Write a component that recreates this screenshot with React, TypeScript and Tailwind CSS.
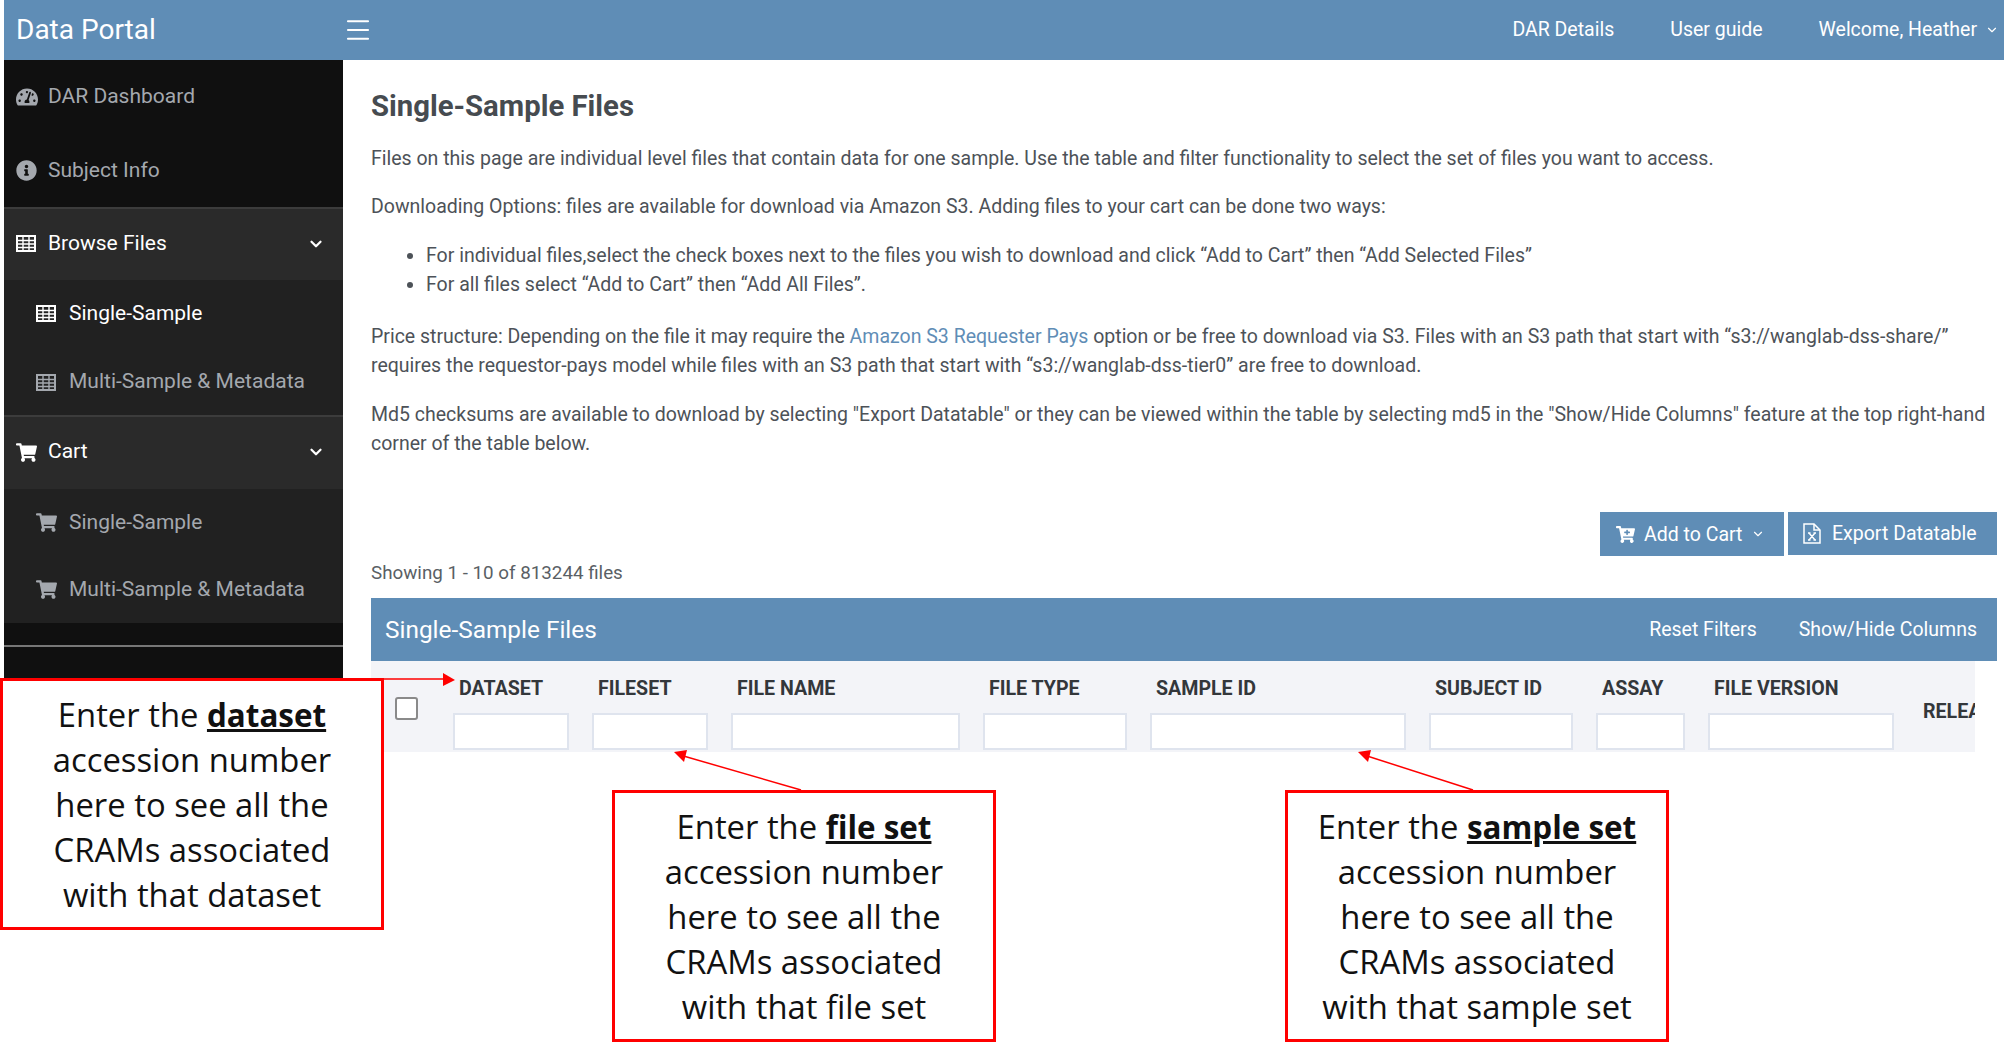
import { ChevronDown, Menu } from "lucide-react";
import { FaCartPlus, FaInfoCircle, FaShoppingCart, FaTachometerAlt } from "react-icons/fa";

const filterColumns = [
  { label: "DATASET", width: "w-[116px]" },
  { label: "FILESET", width: "w-[116px]" },
  { label: "FILE NAME", width: "w-[229px]" },
  { label: "FILE TYPE", width: "w-[144px]" },
  { label: "SAMPLE ID", width: "w-[256px]" },
  { label: "SUBJECT ID", width: "w-[144px]" },
  { label: "ASSAY", width: "w-[89px]" },
  { label: "FILE VERSION", width: "w-[186px]" },
];

// thin outlined grid, the react-icons table glyph has a filled head
function TableIcon() {
  return (
    <svg width="20" height="17" viewBox="0 0 20 17" fill="none" stroke="currentColor">
      <rect x="1" y="1" width="18" height="15" strokeWidth="2" />
      <path d="M1 5.5H19M1 9H19M1 12.5H19M7 1V16M13 1V16" strokeWidth="1.4" />
    </svg>
  );
}

function ExcelFileIcon() {
  return (
    <svg width="18" height="21" viewBox="0 0 18 21" fill="none" stroke="currentColor" strokeWidth="1.5">
      <path d="M1 1H11L17 7V20H1Z" />
      <path d="M11 1V7H17" />
      <path d="M5 10H7.5M10.5 10H13M5 17H7.5M10.5 17H13M6 10L12 17M12 10L6 17" strokeWidth="1.4" />
    </svg>
  );
}

function SideItem({ icon, label, active, sub, caret }: { icon: React.ReactNode; label: string; active?: boolean; sub?: boolean; caret?: boolean }) {
  return (
    <div className={`flex h-full items-center ${sub ? "pl-[32px]" : "pl-[12px]"} pr-[18px] text-[21px] ${active ? "text-white" : "text-[#a4a8ae]"}`}>
      <span className={`flex ${sub ? "w-[33px]" : "w-[32px]"} shrink-0 items-center text-[21px]`}>{icon}</span>
      <span className="flex-1 whitespace-nowrap">{label}</span>
      {caret && <ChevronDown className="h-[18px] w-[18px] text-white" strokeWidth={3} />}
    </div>
  );
}

function Sidebar() {
  return (
    <aside className="w-[339px] shrink-0 bg-[#101010]">
      <div className="h-[74px]"><SideItem icon={<FaTachometerAlt className="text-[22px]" />} label="DAR Dashboard" /></div>
      <div className="h-[73px]"><SideItem icon={<FaInfoCircle />} label="Subject Info" /></div>
      <div className="h-[73px] border-t-2 border-[#3c3c3c] bg-[#2a2a2a] pb-[2px]"><SideItem icon={<TableIcon />} label="Browse Files" active caret /></div>
      <div className="bg-[#212121]">
        <div className="h-[67px]"><SideItem icon={<TableIcon />} label="Single-Sample" active sub /></div>
        <div className="h-[68px] pt-[2px]"><SideItem icon={<TableIcon />} label="Multi-Sample &amp; Metadata" sub /></div>
      </div>
      <div className="h-[74px] border-t-2 border-[#3c3c3c] bg-[#2a2a2a] pb-[2px]"><SideItem icon={<FaShoppingCart />} label="Cart" active caret /></div>
      <div className="bg-[#212121]">
        <div className="h-[67px]"><SideItem icon={<FaShoppingCart />} label="Single-Sample" sub /></div>
        <div className="h-[67px]"><SideItem icon={<FaShoppingCart />} label="Multi-Sample &amp; Metadata" sub /></div>
      </div>
      <div className="mt-[22px] h-[150px] border-t-2 border-[#777777]" />
    </aside>
  );
}

function Callout({ className, bold, last }: { className: string; bold: string; last: string }) {
  return (
    <div className={`absolute flex h-[252px] w-[384px] flex-col items-center justify-center border-[3px] border-[#ff0000] bg-white text-center font-['Open_Sans',sans-serif] text-[32.8px] leading-[45px] text-[#111] ${className}`}>
      <div>Enter the <b className="text-[31.4px] underline">{bold}</b></div>
      <div>accession number</div>
      <div>here to see all the</div>
      <div>CRAMs associated</div>
      <div>with that {last}</div>
    </div>
  );
}

function Arrows() {
  return (
    <svg className="pointer-events-none absolute top-0 left-0" width="2004" height="1053">
      <g stroke="#ff0000" strokeWidth="1.5" fill="#ff0000">
        <line x1="384" y1="679" x2="445" y2="679" />
        <polygon points="443,673 455,680 443,686" stroke="none" />
        <line x1="801" y1="790" x2="680" y2="755" />
        <polygon points="674,752 687,750 684,762" stroke="none" />
        <line x1="1473" y1="790" x2="1364" y2="755" />
        <polygon points="1358,752 1371,750 1368,762" stroke="none" />
      </g>
    </svg>
  );
}

export default function App() {
  return (
    <div className="relative h-[1053px] w-[2004px] overflow-hidden bg-white pl-[4px] font-['Roboto',sans-serif] text-[19.5px] text-[#4d5258]">
      <header className="flex h-[60px] items-center bg-[#5f8db6] text-white">
        <div className="w-[339px] pl-[12px] text-[28px]">Data Portal</div>
        <Menu className="h-[30px] w-[30px]" strokeWidth={1.7} />
        <nav className="ml-auto flex items-center gap-[56px] pr-[5px] text-[19.5px]">
          <span>DAR Details</span>
          <span>User guide</span>
          <span className="flex items-center gap-[8px]">Welcome, Heather <ChevronDown className="h-[14px] w-[14px]" /></span>
        </nav>
      </header>
      <div className="flex h-[900px] items-start">
        <Sidebar />
        <main className="min-w-0 flex-1 pt-[27px] pl-[28px] pr-[7px] leading-[29px]">
          <h1 className="text-[29.3px] leading-[38px] font-bold text-[#464b50]">Single-Sample Files</h1>
          <p className="mt-[19px]">Files on this page are individual level files that contain data for one sample. Use the table and filter functionality to select the set of files you want to access.</p>
          <p className="mt-[19px]">Downloading Options: files are available for download via Amazon S3. Adding files to your cart can be done two ways:</p>
          <ul className="mt-[20px] list-disc pl-[55px]">
            <li>For individual files,select the check boxes next to the files you wish to download and click “Add to Cart” then “Add Selected Files”</li>
            <li>For all files select “Add to Cart” then “Add All Files”.</li>
          </ul>
          <p className="mt-[23px]">
            Price structure: Depending on the file it may require the <span className="text-[#5f8db6]">Amazon S3 Requester Pays</span> option or be free to download via S3. Files with an S3 path that start with “s3://wanglab-dss-share/” requires the requestor-pays model while files with an S3 path that start with “s3://wanglab-dss-tier0” are free to download.
          </p>
          <p className="mt-[20px]">Md5 checksums are available to download by selecting "Export Datatable" or they can be viewed within the table by selecting md5 in the "Show/Hide Columns" feature at the top right-hand corner of the table below.</p>
          <div className="mt-[54px] flex justify-end gap-[4px] text-white">
            <button className="flex h-[44px] w-[184px] items-center gap-[9px] bg-[#5f8db6] pl-[16px]"><FaCartPlus className="text-[19px]" />Add to Cart<ChevronDown className="h-[14px] w-[14px]" /></button>
            <button className="flex h-[43px] w-[209px] items-center gap-[11px] bg-[#5f8db6] pl-[15px]"><ExcelFileIcon />Export Datatable</button>
          </div>
          <div className="mt-[2px] text-[18.8px] leading-[30px] text-[#5a5f65]">Showing 1 - 10 of 813244 files</div>
          <div className="mt-[10px] flex h-[63px] items-center justify-between bg-[#5f8db6] pr-[20px] pl-[14px] text-white">
            <span className="text-[24.4px]">Single-Sample Files</span>
            <span className="flex gap-[42px]"><span>Reset Filters</span><span>Show/Hide Columns</span></span>
          </div>
          <div className="flex h-[91px] w-[1604px] overflow-hidden bg-[#f3f4f8] pl-[24px]">
            <div className="flex w-[58px] shrink-0 items-center pt-[3px]">
              <div className="h-[23px] w-[23px] rounded-[3px] border-2 border-[#8a8a8a] bg-white" />
            </div>
            <div className="flex gap-[23px] pt-[16px]">
              {filterColumns.map((col) => (
                <div key={col.label} className={`${col.width} shrink-0`}>
                  <div className="pl-[6px] text-[19.6px] leading-[24px] font-bold whitespace-nowrap text-[#33373b]">{col.label}</div>
                  <div className="mt-[12px] h-[37px] border-2 border-[#dfe4ee] bg-white" />
                </div>
              ))}
              <div className="flex items-center pb-[7px] pl-[6px] text-[19.6px] font-bold whitespace-nowrap text-[#33373b]">RELEASE</div>
            </div>
          </div>
        </main>
      </div>
      <Arrows />
      <Callout className="top-[678px] left-0" bold="dataset" last="dataset" />
      <Callout className="top-[790px] left-[612px]" bold="file set" last="file set" />
      <Callout className="top-[790px] left-[1285px]" bold="sample set" last="sample set" />
    </div>
  );
}
